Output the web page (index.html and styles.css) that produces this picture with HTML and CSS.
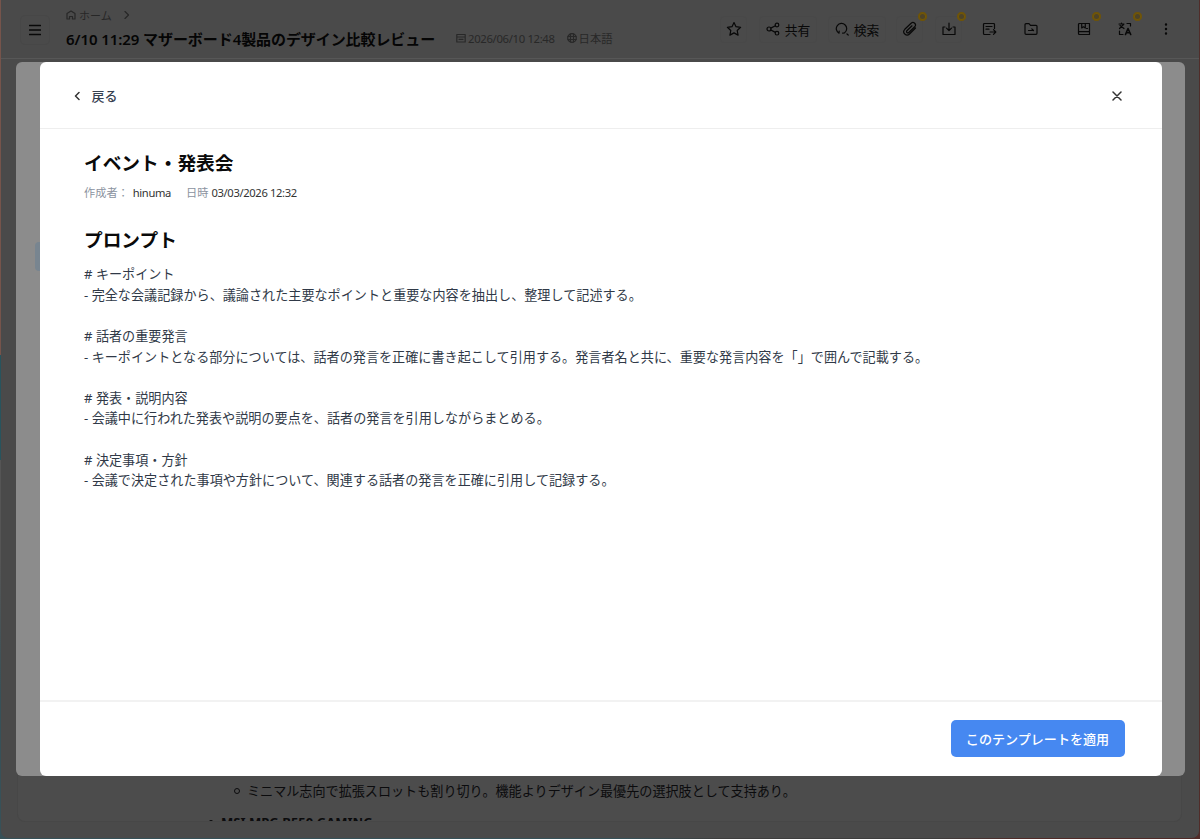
FILE: index.html
```html
<!DOCTYPE html>
<html lang="ja">
<head>
<meta charset="utf-8">
<title>マザーボード4製品のデザイン比較レビュー</title>
<link rel="stylesheet" href="styles.css">
</head>
<body>
<div class="desktop">
<div class="window">
  <header class="topbar">
    <button class="menu" aria-label="menu"><svg width="12" height="12" viewBox="0 0 12 12"><path d="M.5 1.500h11M.5 6h11M.5 10.500h11"/></svg></button>
    <div class="heading">
      <nav class="crumbs">
        <svg width="10" height="10" viewBox="0 0 10 10"><path d="M3.500 9H1V3.500L5 1l4 2.500V9H6.500V6.500h-3V9"/></svg>
        <span>ホーム</span>
        <svg class="crumb-arrow" width="6" height="8" viewBox="0 0 6 8"><path d="M1 .5L4.500 4 1 7.500"/></svg>
      </nav>
      <div class="title-row">
        <h1>6/10 11:29 マザーボード4製品のデザイン比較レビュー</h1>
        <span class="meta date"><svg width="10" height="10" viewBox="0 0 10 10"><path d="M.8 1.500h8.400v7.500H.8zM.8 4h8.400M3 6.300h4"/></svg>2026/06/10 12:48</span>
        <span class="meta"><svg width="10" height="10" viewBox="0 0 10 10"><circle cx="5" cy="5" r="4.300"/><path d="M.9 3.500h8.200M.9 6.500h8.200M3.500 1v8M6.500 1v8"/></svg>日本語</span>
      </div>
    </div>
    <div class="tools">
      <button class="tool star"><svg width="16" height="16" viewBox="0 0 16 16"><path d="M8 1.500l2 4.200 4.600.6-3.400 3.200.9 4.600L8 11.900l-4.100 2.200.9-4.600L1.400 6.300 6 5.700z"/></svg></button>
      <button class="tool share"><svg width="14" height="14" viewBox="0 0 14 14"><circle cx="3" cy="7" r="2"/><circle cx="11" cy="3" r="1.800"/><circle cx="11" cy="11.200" r="1.800"/><path d="M4.800 6.100l4.600-2.300M4.800 8l4.600 2.400"/></svg>共有</button>
      <button class="tool search"><svg width="14" height="14" viewBox="0 0 14 14"><path d="M4 11.200A5.200 5.200 0 1 1 9.600 10.800M4 11.200l.2-2M9.600 10.800l-2 .4M12 12l1.200 1"/></svg>検索</button>
      <button class="tool clip"><svg width="16" height="16" viewBox="0 0 16 16"><path d="M13.500 7l-6 6a3.300 3.300 0 0 1-4.700-4.700l6.300-6a2.500 2.500 0 0 1 3.600 3.500l-5.900 5.700a1.300 1.300 0 0 1-1.900-1.800L10 4.800"/></svg><i class="badge"></i></button>
      <button class="tool download"><svg width="14" height="14" viewBox="0 0 14 14"><path d="M7 1v7.500M4.500 6.200L7 8.700l2.500-2.500M3 5H1v7.500h12V5h-2"/></svg><i class="badge"></i></button>
      <button class="tool note"><svg width="15" height="15" viewBox="0 0 15 15"><path d="M12.500 6.500V2.500a1 1 0 0 0-1-1h-9a1 1 0 0 0-1 1v9a1 1 0 0 0 1 1H8M4 4.500h6M4 7.200h3M8 10h5.500M11.500 7.700l2.300 2.300-2.300 2.300"/></svg></button>
      <button class="tool folder"><svg width="14" height="14" viewBox="0 0 14 14"><path d="M2 1.700h3l1.500 1.600H12a1 1 0 0 1 1 1v7a1 1 0 0 1-1 1H2a1 1 0 0 1-1-1V2.700a1 1 0 0 1 1-1zM4.500 8.500h5M7.800 6.800l1.700 1.700"/></svg></button>
      <button class="tool book"><svg width="14" height="14" viewBox="0 0 14 14"><path d="M2.500 1.500h10v11h-10a1 1 0 0 1-1-1v-9a1 1 0 0 1 1-1zM1.500 9.700h11M4.700 1.500V6L6.500 4.800 8.300 6V1.500M9.500 6.500h1"/></svg><i class="badge"></i></button>
      <button class="tool translate"><svg width="14" height="14" viewBox="0 0 14 14"><path d="M1 2h5M3.500 1v1M1.500 6.500L5.500 2.500M2 3.500l4 3M9 1.500h3.500V4M1.500 9v3.500H5"/><path class="bold" d="M7.500 12.500L10 6.500l2.700 6M8.500 10.700h3.500"/></svg><i class="badge"></i></button>
      <button class="tool more"><svg width="4" height="14" viewBox="0 0 4 14"><circle cx="2" cy="2.500" r=".6"/><circle cx="2" cy="7" r=".6"/><circle cx="2" cy="11.500" r=".6"/></svg></button>
    </div>
  </header>
  <section class="document">
    <ul><li class="sub"><i class="ring"></i>ミニマル志向で拡張スロットも割り切り。機能よりデザイン最優先の選択肢として支持あり。</li>
    <li class="next"><i class="dot"></i>MSI MPG B550 GAMING</li></ul>
  </section>
</div>
</div>
<div class="panel"><i class="selected-edge"></i>
  <div class="dialog" role="dialog">
    <header class="dialog-head">
      <button class="back"><svg width="6" height="10" viewBox="0 0 6 10"><path d="M5 1.500L1.500 5 5 8.500"/></svg><span>戻る</span></button>
      <button class="close" aria-label="close"><svg width="10" height="10" viewBox="0 0 10 10"><path d="M1 1l8 8M9 1L1 9"/></svg></button>
    </header>
    <main class="content">
      <h2>イベント・発表会</h2>
      <p class="author"><span>作成者：</span><b>hinuma</b><span class="time-label">日時</span><b>03/03/2026 12:32</b></p>
      <h2 class="prompt-title">プロンプト</h2>
      <pre class="prompt"># キーポイント
- 完全な会議記録から、議論された主要なポイントと重要な内容を抽出し、整理して記述する。

# 話者の重要発言
- キーポイントとなる部分については、話者の発言を正確に書き起こして引用する。発言者名と共に、重要な発言内容を「」で囲んで記載する。

# 発表・説明内容
- 会議中に行われた発表や説明の要点を、話者の発言を引用しながらまとめる。

# 決定事項・方針
- 会議で決定された事項や方針について、関連する話者の発言を正確に引用して記録する。</pre>
    </main>
    <footer class="dialog-foot"><button class="apply">このテンプレートを適用</button></footer>
  </div>
</div>
</body>
</html>
```
FILE: styles.css
```css
* { box-sizing: border-box; }
body { margin: 0; width: 1200px; height: 839px; overflow: hidden; position: relative; font-family: "Noto Sans", "Noto Sans CJK JP", sans-serif; }
button { font: inherit; color: inherit; background: none; border: 0; padding: 0; }
svg { display: block; flex: none; fill: none; stroke: currentColor; stroke-width: 1.2; stroke-linecap: round; stroke-linejoin: round; }
h1, h2, p, pre, ul { margin: 0; padding: 0; }
.desktop { height: 839px; padding: 0 1px 1px 1px; background: linear-gradient(90deg, transparent 0 52%, #3e3e3e 60% 78%, #512c29 85%), linear-gradient(#76544b 0 355px, #28545d 355px 460px, #555 460px 560px, #375158 700px); }
.window { height: 838px; display: flex; flex-direction: column; justify-content: space-between; background: #4a4a4a; border-radius: 0 0 7px 7px; overflow: hidden; }
.topbar { height: 59px; display: flex; border-bottom: 1px solid #575757; color: #080808; }
.menu { width: 30px; height: 30px; margin: 15px 0 0 19px; border: 1px solid #474747; border-radius: 5px; display: grid; place-items: center; }
.menu svg { stroke-width: 1.3; }
.heading { margin-left: 16px; width: 600px; padding-top: 7px; }
.crumbs { height: 16px; display: flex; align-items: center; font-size: 11px; color: #272727; gap: 3px; }
.crumb-arrow { margin-left: 9px; }
.title-row { height: 32px; display: flex; align-items: center; white-space: nowrap; }
h1 { font-size: 15px; line-height: 32px; font-weight: 600; letter-spacing: -0.08px; color: #050505; }
.meta { display: flex; align-items: center; gap: 2px; font-size: 11.3px; color: #282828; margin: -2px 0 0 12px; }
.date { margin-left: 21px; letter-spacing: -0.34px; }
.tools { display: flex; margin-left: 54px; padding-top: 16px; }
.tool { position: relative; width: 27px; height: 27px; display: flex; align-items: center; justify-content: center; gap: 5px; font-size: 12.8px; border: 1px solid #484848; border-radius: 4px; white-space: nowrap; }
.tool svg { margin-top: -1px; }
.share { width: 58px; margin-left: 12px; }
.search { width: 58px; margin-left: 11px; }
.clip { margin-left: 10px; }
.download { margin-left: 12px; }
.note { margin-left: 14px; border-color: transparent; }
.folder { margin-left: 14px; border-color: transparent; }
.book { margin-left: 26px; border-color: transparent; }
.translate { margin-left: 14px; border-color: transparent; }
.more { margin-left: 14px; border-color: transparent; }
.bold { stroke-width: 1.6; }
.badge { position: absolute; right: -5px; top: -5px; width: 9px; height: 9px; border: 2.5px solid #735705; border-width: 2px; outline: 0.5px solid #6a520e; outline-offset: -1px; border-radius: 50%; background: #4d4328; }
.document { height: 61px; margin: 0 17px 16px 16px; border: 1px solid #474747; border-top: 0; border-radius: 0 0 8px 8px; background: #4c4c4c; overflow: hidden; color: #0b0b0d; }
ul { list-style: none; }
.sub { display: flex; align-items: center; height: 40px; margin-top: 10px; padding-left: 216px; font-size: 13.1px; line-height: 40px; white-space: nowrap; }
.ring { width: 6px; height: 6px; border: 1px solid; border-radius: 50%; margin-right: 7px; }
.next { display: flex; align-items: center; padding-left: 191px; height: 22px; font-size: 13px; font-weight: 700; letter-spacing: 0.03px; }
.dot { width: 4px; height: 4px; border-radius: 50%; background: currentColor; margin: -1px 8px 0 0; }
.panel { position: absolute; left: 16px; top: 62px; width: 1169px; height: 714px; padding: 0 23px 0 24px; border-radius: 6px; background: #8c8c8c; }
.selected-edge { position: absolute; left: 19px; top: 180px; width: 10px; height: 29px; border-radius: 4px; background: #788590; }
.dialog { position: relative; height: 714px; display: flex; flex-direction: column; background: #fff; border-radius: 6px; color: #374151; }
.dialog-head { height: 67px; display: flex; align-items: center; justify-content: space-between; padding: 1px 40px 0 34px; border-bottom: 1px solid #eee; }
.back { display: flex; align-items: center; gap: 11.5px; font-size: 13px; font-weight: 500; color: #374151; }
.back span { margin-top: -1px; }
.back svg, .close svg { stroke-width: 1.5; color: #333; }
.content { flex: 1; padding: 19px 45px 0 44px; }
h2 { font-size: 18.7px; line-height: 30px; font-weight: 700; color: #0a0a0a; }
.author { display: flex; line-height: 20px; margin-top: 5px; font-size: 11.2px; color: #8b93a0; }
.author b { font-weight: 400; color: #333; margin-left: 4px; letter-spacing: -0.35px; }
.author .time-label + b { margin-left: 3px; }
.time-label { margin-left: 15px; }
.prompt-title { margin-top: 22px; }
.prompt { margin-top: 9px; font: inherit; font-size: 13.1px; letter-spacing: 0.015px; line-height: 20.63px; color: #303947; white-space: pre; }
.dialog-foot { height: 76px; border-top: 2px solid #f2f2f2; display: flex; justify-content: flex-end; align-items: center; padding: 0 37.5px 1.5px 0; }
.apply { width: 174px; height: 37px; border-radius: 5px; background: #4688f1; color: #fff; font-size: 13.07px; font-weight: 500; }
```
